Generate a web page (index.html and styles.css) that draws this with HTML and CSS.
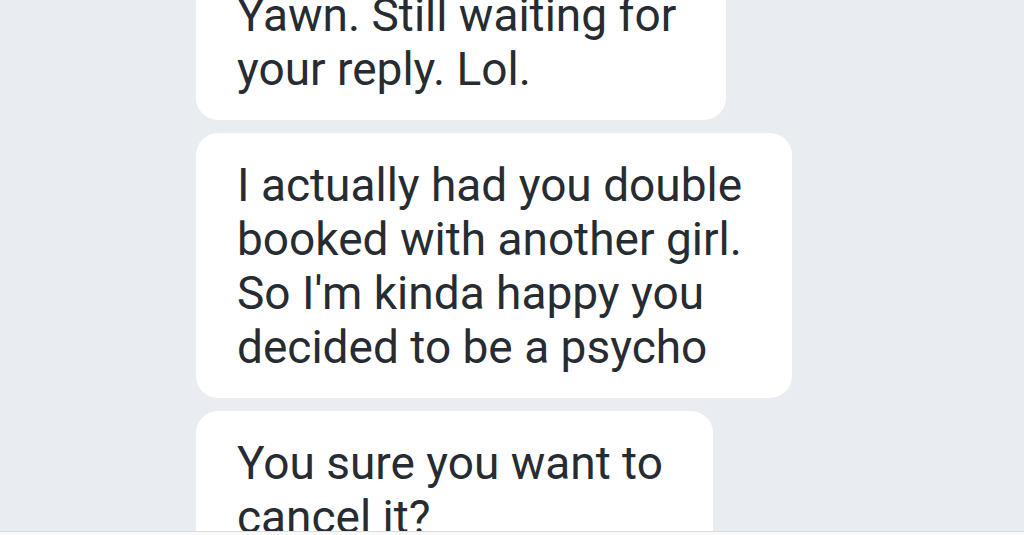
FILE: index.html
```html
<!DOCTYPE html>
<html>
<head>
    <title>Messages</title>
    <link rel="stylesheet" href="styles.css">
</head>
<body>
    <div class="thread">
        <div class="bubble">
            <p>Yawn. Still waiting for<br>your reply. Lol.</p>
        </div>
        <div class="bubble">
            <p>I actually had you double<br>booked with another girl.<br>So I'm kinda happy you<br>decided to be a psycho</p>
        </div>
        <div class="bubble">
            <p>You sure you want to<br>cancel it?</p>
        </div>
    </div>
    <div class="bottom-bar"></div>
</body>
</html>
```

FILE: styles.css
```css
html, body {
    margin: 0;
    height: 100%;
    overflow: hidden;
}
body {
    background-color: #e9ecf0;
    font-family: Roboto, "Liberation Sans", sans-serif;
    color: #262c31;
    display: flex;
    flex-direction: column;
}
.thread {
    flex: 1;
    display: flex;
    flex-direction: column;
    align-items: flex-start;
    gap: 13px;
    margin-top: -37px;
    padding-left: 196px;
    overflow: hidden;
}
.bubble {
    flex-shrink: 0;
    background-color: #fff;
    border-radius: 22px;
    padding: 25px 50px 24px 41px;
}
.bubble p {
    margin: 0;
    font-size: 46px;
    line-height: 54px;
    white-space: nowrap;
}
.bottom-bar {
    height: 3px;
    border-top: 1px solid #d9dcdf;
    background-color: #fafafa;
}
```
